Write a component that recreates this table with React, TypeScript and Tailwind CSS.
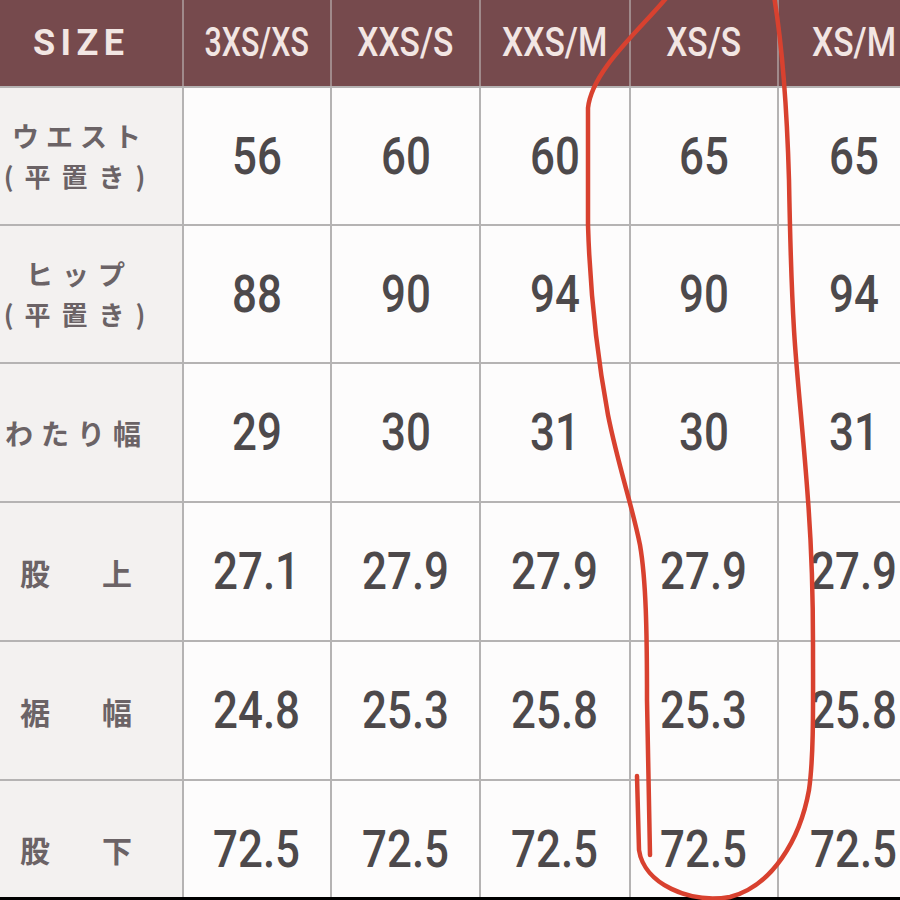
import React from "react";

type Row = {
  label: React.ReactNode;
  values: string[];
};

const sizes = ["3XS/XS", "XXS/S", "XXS/M", "XS/S", "XS/M"];

function Spread({ a, b }: { a: string; b: string }) {
  return (
    <div className="w-full pl-[20px]">
      <div className="flex w-[112px] justify-between text-[30px] leading-none">
        <span>{a}</span>
        <span>{b}</span>
      </div>
    </div>
  );
}

function TwoLine({ top, topTrack }: { top: string; topTrack: string }) {
  return (
    <div className="w-full flex flex-col items-center leading-[40px] pr-[22px] whitespace-nowrap">
      <span className={`text-[27px] ${topTrack}`}>{top}</span>
      <span className="text-[26px] tracking-[11px]">(平置き)</span>
    </div>
  );
}

const rows: Row[] = [
  {
    label: <TwoLine top="ウエスト" topTrack="tracking-[7px]" />,
    values: ["56", "60", "60", "65", "65"],
  },
  {
    label: <TwoLine top="ヒップ" topTrack="tracking-[9px]" />,
    values: ["88", "90", "94", "90", "94"],
  },
  {
    label: (
      <div className="pr-[28px] text-[28px] tracking-[8px] whitespace-nowrap">
        わたり幅
      </div>
    ),
    values: ["29", "30", "31", "30", "31"],
  },
  { label: <Spread a="股" b="上" />, values: ["27.1", "27.9", "27.9", "27.9", "27.9"] },
  { label: <Spread a="裾" b="幅" />, values: ["24.8", "25.3", "25.8", "25.3", "25.8"] },
  { label: <Spread a="股" b="下" />, values: ["72.5", "72.5", "72.5", "72.5", "72.5"] },
];

export default function App() {
  return (
    <div className="relative w-[900px] h-[900px] overflow-hidden bg-white font-['Roboto',sans-serif]">
      <div className="flex flex-col">
        {/* HEADER */}
        <div className="grid grid-cols-[182px_146px_147px_148px_146px_150px] gap-x-[2px] bg-[#a08a8b] h-[86px]">
          <div className="bg-[#764a4d] flex items-center pl-[33px]">
            <span className="text-[#f2e6e3] text-[36px] font-bold tracking-[0.15em]">
              SIZE
            </span>
          </div>
          {sizes.map((s, i) => (
            <div
              key={s}
              className="bg-[#764a4d] flex items-center justify-center"
            >
              <span
                className={
                  i === 0
                    ? "inline-block text-[#f2e6e3] text-[40px] font-medium leading-none scale-x-[0.76]"
                    : "inline-block text-[#f2e6e3] text-[40px] font-medium leading-none scale-x-[0.84]"
                }
              >
                {s}
              </span>
            </div>
          ))}
        </div>

        {/* BODY */}
        <div className="h-[811px] overflow-hidden bg-[#b5b3b3] pt-[2px]">
          <div className="grid grid-cols-[182px_146px_147px_148px_146px_150px] grid-rows-[136px_136px_137px_137px_137px_136px] gap-[2px]">
            {rows.map((row, r) => (
              <React.Fragment key={r}>
                <div className="bg-[#f3f1f0] flex items-center justify-center text-[#6b6366] font-bold font-['Noto_Sans_CJK_JP',sans-serif]">
                  {row.label}
                </div>
                {row.values.map((v, c) => (
                  <div
                    key={c}
                    className="bg-[#fdfcfc] flex items-center justify-center"
                  >
                    <span className="inline-block text-[51px] leading-none font-medium text-[#4d494b] scale-x-[0.86]">
                      {v}
                    </span>
                  </div>
                ))}
              </React.Fragment>
            ))}
          </div>
        </div>

        <div className="h-[3px] bg-black" />
      </div>

      {/* hand-drawn red mark */}
      <svg
        className="absolute inset-0 pointer-events-none"
        width="900"
        height="900"
        viewBox="0 0 900 900"
        fill="none"
      >
        <path
          d="M668 -4 C640 30 592 70 588 108 L588 225 C590 290 596 350 608 415 C618 465 632 505 640 545 C646 580 647 630 647 700 L650 855"
          stroke="#d8412f"
          strokeWidth="4.5"
          strokeLinecap="round"
        />
        <path
          d="M637 776 L639 850 C644 884 690 904 730 897 C772 886 800 840 809 790 C814 755 813 700 813 645 C813 590 812 553 808 500 C803 430 797 380 794 330 C791 280 790 235 789 180 C787 110 783 50 774 -4"
          stroke="#d8412f"
          strokeWidth="4.5"
          strokeLinecap="round"
        />
      </svg>
    </div>
  );
}
